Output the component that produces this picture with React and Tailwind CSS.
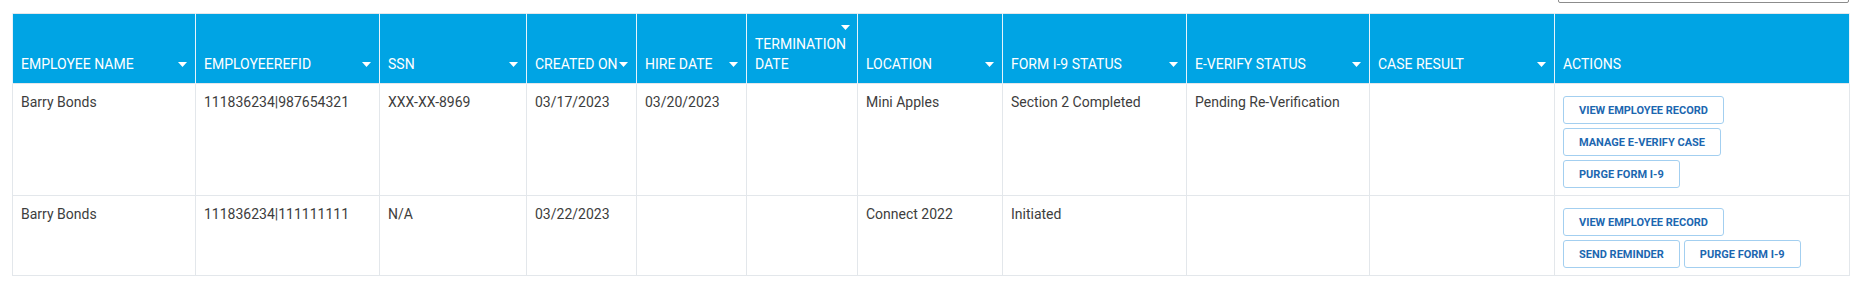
import React from 'react';

const columns = [
    { key: 'name', label: 'EMPLOYEE NAME', width: 183, sort: true },
    { key: 'refid', label: 'EMPLOYEEREFID', width: 184, sort: true },
    { key: 'ssn', label: 'SSN', width: 147, sort: true },
    { key: 'created', label: 'CREATED ON', width: 110, sort: true },
    { key: 'hire', label: 'HIRE DATE', width: 110, sort: true },
    { key: 'term', label: 'TERMINATION DATE', width: 111, sort: true, top: true },
    { key: 'location', label: 'LOCATION', width: 145, sort: true },
    { key: 'i9', label: 'FORM I-9 STATUS', width: 184, sort: true },
    { key: 'everify', label: 'E-VERIFY STATUS', width: 183, sort: true },
    { key: 'result', label: 'CASE RESULT', width: 185, sort: true },
    { key: 'actions', label: 'ACTIONS', width: 295, sort: false },
];

const rows = [
    {
        id: 1,
        name: 'Barry Bonds',
        refid: '111836234|987654321',
        ssn: 'XXX-XX-8969',
        created: '03/17/2023',
        hire: '03/20/2023',
        term: '',
        location: 'Mini Apples',
        i9: 'Section 2 Completed',
        everify: 'Pending Re-Verification',
        result: '',
        actions: [['VIEW EMPLOYEE RECORD'], ['MANAGE E-VERIFY CASE'], ['PURGE FORM I-9']],
    },
    {
        id: 2,
        name: 'Barry Bonds',
        refid: '111836234|111111111',
        ssn: 'N/A',
        created: '03/22/2023',
        hire: '',
        term: '',
        location: 'Connect 2022',
        i9: 'Initiated',
        everify: '',
        result: '',
        actions: [['VIEW EMPLOYEE RECORD'], ['SEND REMINDER', 'PURGE FORM I-9']],
    },
];

function Caret() {
    return (
        <svg width="9" height="5" viewBox="0 0 9 5" className="shrink-0">
            <path d="M0 0 L9 0 L4.5 5 Z" fill="#ffffff" />
        </svg>
    );
}

function ActionButton({ children }) {
    return (
        <button
            type="button"
            className="h-[28px] px-[15px] bg-white border border-[#a3cff0] rounded-[3px] text-[11px] font-bold text-[#1c67b0] leading-none whitespace-nowrap"
        >
            {children}
        </button>
    );
}

export default function App() {
    return (
        <div className="w-[1860px] h-[285px] bg-white" style={{ fontFamily: 'Roboto, "Liberation Sans", sans-serif' }}>
            <div className="flex justify-end pr-[11px] h-[13px]">
                <div className="w-[291px] h-[30px] -mt-[27px] border border-[#8c8c8c] rounded-[2px]"></div>
            </div>

            <div className="pl-[12px]">
                <table className="table-fixed border-collapse border border-[#e3e7eb]" style={{ width: 1837 }}>
                    <colgroup>
                        {columns.map((col) => (
                            <col key={col.key} style={{ width: col.width }} />
                        ))}
                    </colgroup>
                    <thead>
                        <tr className="bg-[#00a4e4]">
                            {columns.map((col) => (
                                <th
                                    key={col.key}
                                    className="h-[70px] align-bottom text-left font-normal text-white text-[14px] leading-[20px] px-[8px] pb-[9px] border-x border-[#e6f3fb]"
                                >
                                    {col.top ? (
                                        <div className="flex flex-col">
                                            <div className="flex justify-end items-center h-[14px] -mr-[1px]">
                                                <Caret />
                                            </div>
                                            <span>TERMINATION</span>
                                            <span>DATE</span>
                                        </div>
                                    ) : (
                                        <div className="flex items-center justify-between gap-[1px]">
                                            <span className="whitespace-nowrap">{col.label}</span>
                                            {col.sort && <Caret />}
                                        </div>
                                    )}
                                </th>
                            ))}
                        </tr>
                    </thead>
                    <tbody>
                        {rows.map((row) => (
                            <tr key={row.id}>
                                {columns.map((col) => (
                                    <td
                                        key={col.key}
                                        className="align-top border border-[#e3e7eb] px-[8px] pt-[8px] pb-[7px] text-[14px] leading-[20px] text-[#3d3d3d]"
                                    >
                                        {col.key === 'actions' ? (
                                            <div className="flex flex-col gap-[4px] mt-[4px]">
                                                {row.actions.map((line, i) => (
                                                    <div key={i} className="flex gap-[4px]">
                                                        {line.map((label) => (
                                                            <ActionButton key={label}>{label}</ActionButton>
                                                        ))}
                                                    </div>
                                                ))}
                                            </div>
                                        ) : (
                                            row[col.key]
                                        )}
                                    </td>
                                ))}
                            </tr>
                        ))}
                    </tbody>
                </table>
            </div>
        </div>
    );
}
